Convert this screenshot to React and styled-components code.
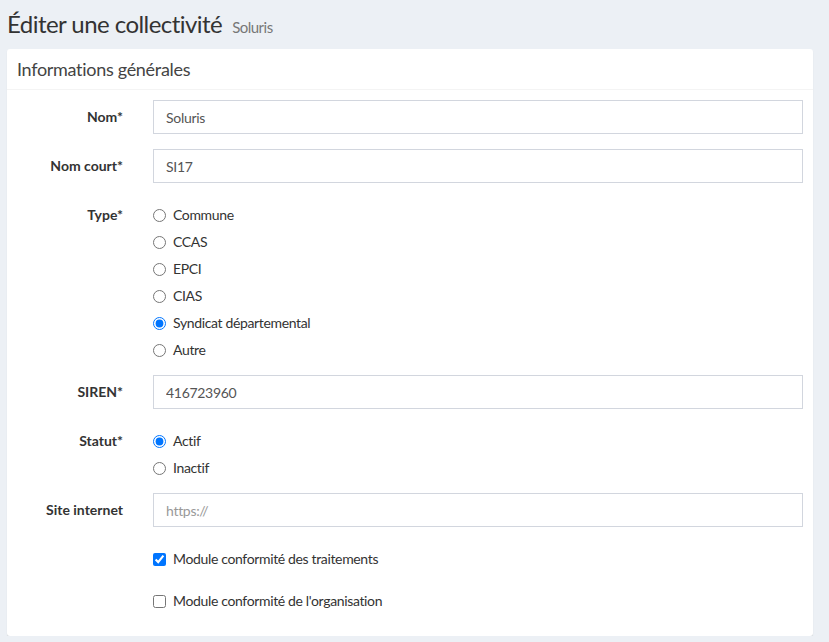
import React, { useState } from 'react';
import styled, { createGlobalStyle } from 'styled-components';

const GlobalStyle = createGlobalStyle`
    body {
        margin: 0;
        background: #ecf0f5;
        font-family: 'Lato', 'Noto Sans', sans-serif;
        color: #333;
        font-size: 14px;
    }
`;

const Page = styled.div`
    padding: 0 16px 0 7px;
`;

const Header = styled.div`
    display: flex;
    align-items: baseline;
    gap: 10px;
    padding: 9px 0 10px;
    h1 {
        margin: 0;
        font-size: 24px;
        font-weight: 400;
        line-height: 30px;
        letter-spacing: -0.55px;
        color: #333;
    }
    small {
        font-size: 15px;
        letter-spacing: -0.5px;
        color: #777;
    }
`;

const Box = styled.div`
    background: #fff;
    border-radius: 3px;
    box-shadow: 0 1px 1px rgba(0, 0, 0, 0.12);
`;

const BoxHeader = styled.div`
    padding: 10px;
    border-bottom: 1px solid #f4f4f4;
    font-size: 18px;
    line-height: 20px;
    letter-spacing: -0.3px;
    color: #444;
`;

const BoxBody = styled.form`
    padding: 10px;
`;

const FormGroup = styled.div`
    display: grid;
    grid-template-columns: 106px 1fr;
    column-gap: 30px;
    margin-bottom: 15px;
`;

const Label = styled.label`
    text-align: right;
    font-weight: 700;
    padding-top: 7px;
    line-height: 20px;
`;

const Input = styled.input`
    box-sizing: border-box;
    width: 100%;
    height: 34px;
    padding: 6px 12px;
    border: 1px solid #d2d6de;
    border-radius: 0;
    font-family: inherit;
    font-size: 14px;
    letter-spacing: -0.3px;
    color: #555;
    outline: none;
    &::placeholder {
        color: #999;
    }
`;

const Choices = styled.div`
    display: flex;
    flex-direction: column;
    gap: 7px;
    padding-top: 7px;
    grid-column: ${(p) => (p.$full ? '2' : 'auto')};
`;

const Choice = styled.label`
    display: flex;
    align-items: center;
    gap: 7px;
    height: 20px;
    line-height: 20px;
    letter-spacing: -0.35px;
    color: #333;
    input {
        margin: 0;
        width: 13px;
        height: 13px;
    }
`;

const types = ['Commune', 'CCAS', 'EPCI', 'CIAS', 'Syndicat départemental', 'Autre'];

function App() {
    const [type, setType] = useState('Syndicat départemental');
    const [statut, setStatut] = useState('Actif');
    const [nom, setNom] = useState('Soluris');
    const [court, setCourt] = useState('SI17');
    const [siren, setSiren] = useState('416723960');
    const [site, setSite] = useState('');
    const [modTraitements, setModTraitements] = useState(true);
    const [modOrganisation, setModOrganisation] = useState(false);

    return (
        <Page>
            <GlobalStyle />
            <Header>
                <h1>Éditer une collectivité</h1>
                <small>Soluris</small>
            </Header>
            <Box>
                <BoxHeader>Informations générales</BoxHeader>
                <BoxBody onSubmit={(e) => e.preventDefault()}>
                    <FormGroup>
                        <Label>Nom*</Label>
                        <Input value={nom} onChange={(e) => setNom(e.target.value)} />
                    </FormGroup>
                    <FormGroup>
                        <Label>Nom court*</Label>
                        <Input value={court} onChange={(e) => setCourt(e.target.value)} />
                    </FormGroup>
                    <FormGroup>
                        <Label>Type*</Label>
                        <Choices>
                            {types.map((t) => (
                                <Choice key={t}>
                                    <input
                                        type="radio"
                                        name="type"
                                        checked={type === t}
                                        onChange={() => setType(t)}
                                    />
                                    {t}
                                </Choice>
                            ))}
                        </Choices>
                    </FormGroup>
                    <FormGroup>
                        <Label>SIREN*</Label>
                        <Input value={siren} onChange={(e) => setSiren(e.target.value)} />
                    </FormGroup>
                    <FormGroup>
                        <Label>Statut*</Label>
                        <Choices>
                            {['Actif', 'Inactif'].map((s) => (
                                <Choice key={s}>
                                    <input
                                        type="radio"
                                        name="statut"
                                        checked={statut === s}
                                        onChange={() => setStatut(s)}
                                    />
                                    {s}
                                </Choice>
                            ))}
                        </Choices>
                    </FormGroup>
                    <FormGroup>
                        <Label>Site internet</Label>
                        <Input
                            placeholder="https://"
                            value={site}
                            onChange={(e) => setSite(e.target.value)}
                        />
                    </FormGroup>
                    <FormGroup>
                        <Choices $full>
                            <Choice>
                                <input
                                    type="checkbox"
                                    checked={modTraitements}
                                    onChange={(e) => setModTraitements(e.target.checked)}
                                />
                                Module conformité des traitements
                            </Choice>
                        </Choices>
                    </FormGroup>
                    <FormGroup>
                        <Choices $full>
                            <Choice>
                                <input
                                    type="checkbox"
                                    checked={modOrganisation}
                                    onChange={(e) => setModOrganisation(e.target.checked)}
                                />
                                Module conformité de l'organisation
                            </Choice>
                        </Choices>
                    </FormGroup>
                </BoxBody>
            </Box>
        </Page>
    );
}

export default App;
